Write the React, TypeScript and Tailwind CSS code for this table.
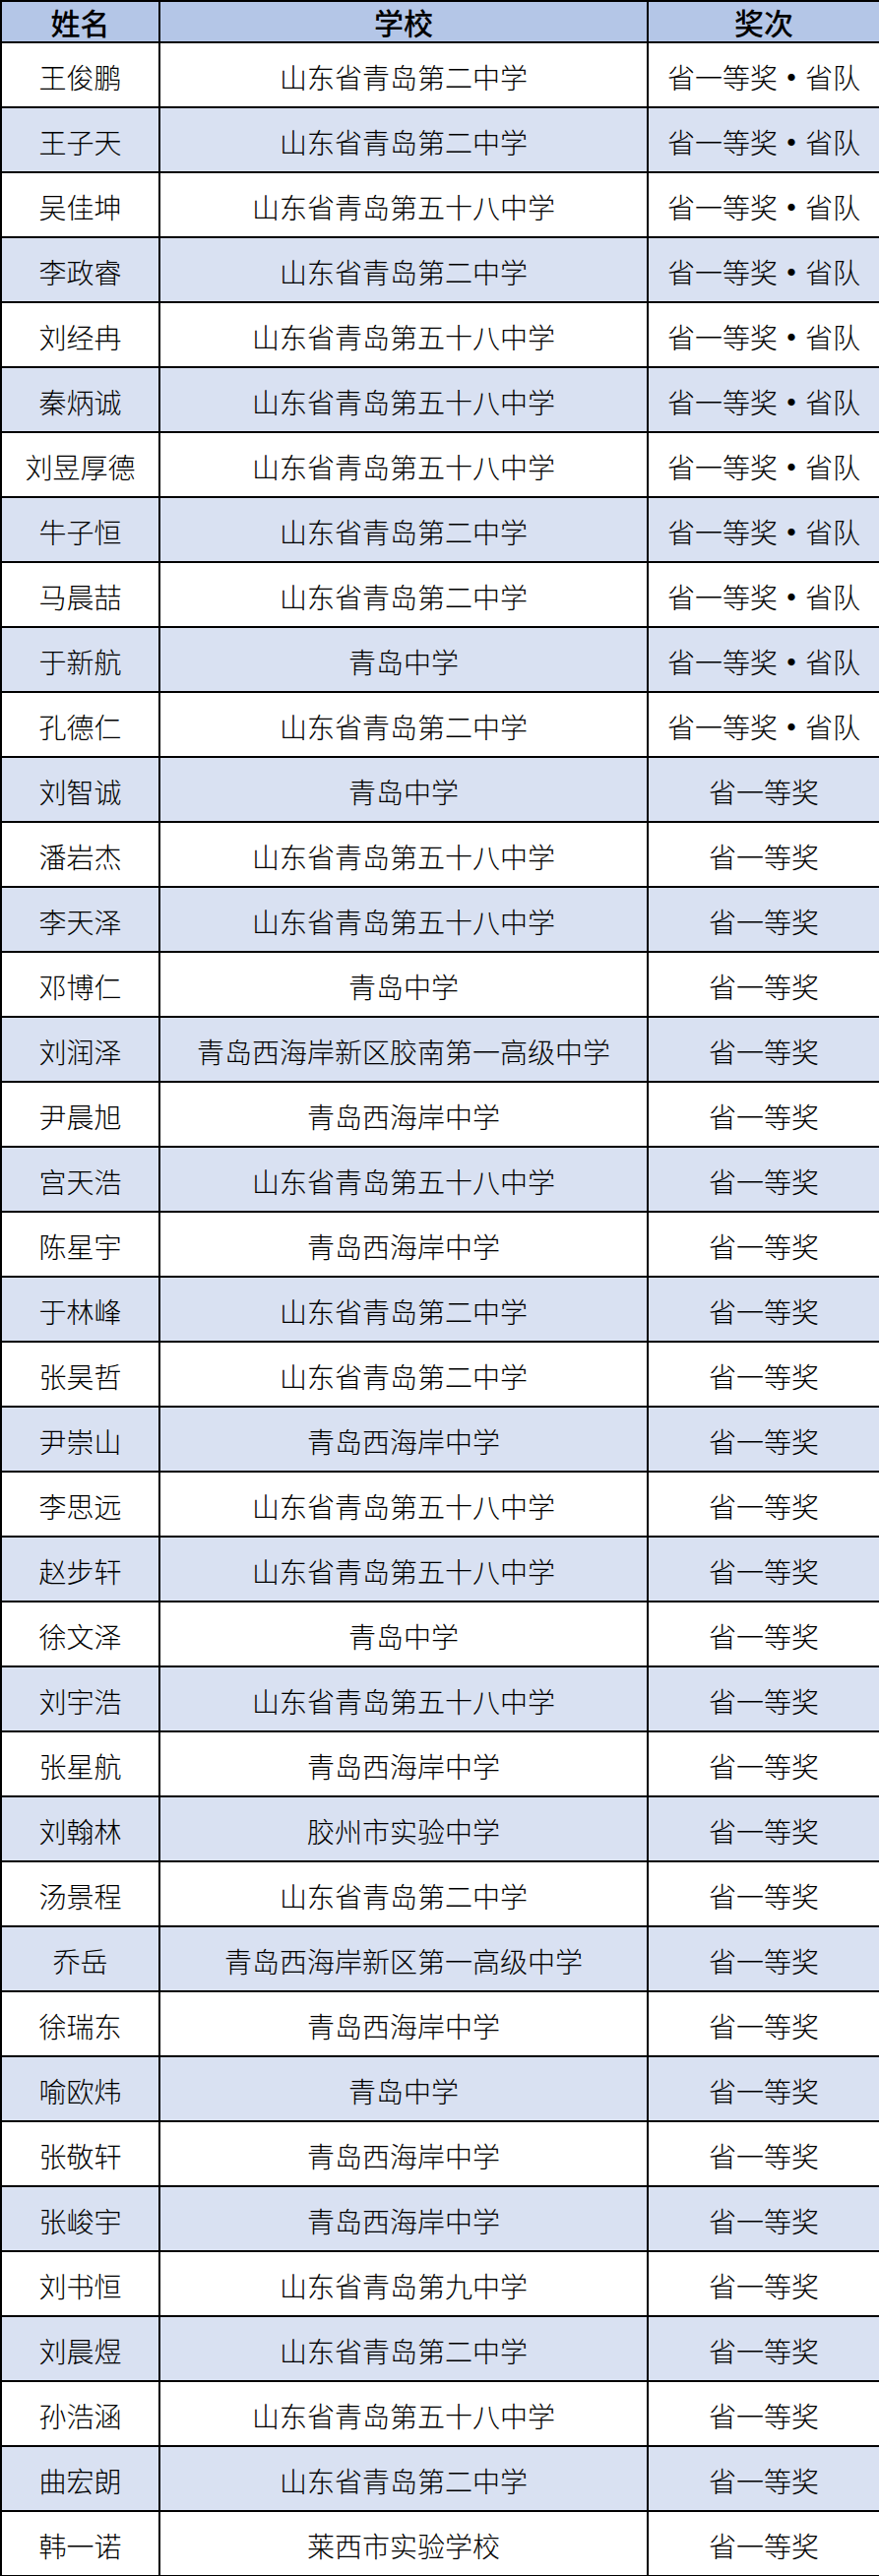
import React from 'react';

type Row = [string, string, boolean];

const rows: Row[] = [
  ['王俊鹏', '山东省青岛第二中学', true],
  ['王子天', '山东省青岛第二中学', true],
  ['吴佳坤', '山东省青岛第五十八中学', true],
  ['李政睿', '山东省青岛第二中学', true],
  ['刘经冉', '山东省青岛第五十八中学', true],
  ['秦炳诚', '山东省青岛第五十八中学', true],
  ['刘昱厚德', '山东省青岛第五十八中学', true],
  ['牛子恒', '山东省青岛第二中学', true],
  ['马晨喆', '山东省青岛第二中学', true],
  ['于新航', '青岛中学', true],
  ['孔德仁', '山东省青岛第二中学', true],
  ['刘智诚', '青岛中学', false],
  ['潘岩杰', '山东省青岛第五十八中学', false],
  ['李天泽', '山东省青岛第五十八中学', false],
  ['邓博仁', '青岛中学', false],
  ['刘润泽', '青岛西海岸新区胶南第一高级中学', false],
  ['尹晨旭', '青岛西海岸中学', false],
  ['宫天浩', '山东省青岛第五十八中学', false],
  ['陈星宇', '青岛西海岸中学', false],
  ['于林峰', '山东省青岛第二中学', false],
  ['张昊哲', '山东省青岛第二中学', false],
  ['尹崇山', '青岛西海岸中学', false],
  ['李思远', '山东省青岛第五十八中学', false],
  ['赵步轩', '山东省青岛第五十八中学', false],
  ['徐文泽', '青岛中学', false],
  ['刘宇浩', '山东省青岛第五十八中学', false],
  ['张星航', '青岛西海岸中学', false],
  ['刘翰林', '胶州市实验中学', false],
  ['汤景程', '山东省青岛第二中学', false],
  ['乔岳', '青岛西海岸新区第一高级中学', false],
  ['徐瑞东', '青岛西海岸中学', false],
  ['喻欧炜', '青岛中学', false],
  ['张敬轩', '青岛西海岸中学', false],
  ['张峻宇', '青岛西海岸中学', false],
  ['刘书恒', '山东省青岛第九中学', false],
  ['刘晨煜', '山东省青岛第二中学', false],
  ['孙浩涵', '山东省青岛第五十八中学', false],
  ['曲宏朗', '山东省青岛第二中学', false],
  ['韩一诺', '莱西市实验学校', false],
];

const font = { fontFamily: '"Noto Sans CJK SC", "Noto Sans", sans-serif' };

export default function App() {
  return (
    <div className="w-[893px] bg-white text-black" style={font}>
      <table className="w-[893px] table-fixed border-collapse border-2 border-black">
        <colgroup>
          <col className="w-[161px]" />
          <col className="w-[496px]" />
          <col className="w-[236px]" />
        </colgroup>
        <thead>
          <tr className="h-[42px] bg-[#b4c6e7] text-[30px] leading-none">
            <th className="border-2 border-black font-medium">姓名</th>
            <th className="border-2 border-black font-medium">学校</th>
            <th className="border-2 border-black font-medium">奖次</th>
          </tr>
        </thead>
        <tbody>
          {rows.map(([name, school, team], i) => (
            <tr
              key={name}
              className={`h-[66px] text-[28px] leading-none font-light ${i % 2 === 1 ? 'bg-[#d9e1f2]' : 'bg-white'}`}
            >
              <td className="border-2 border-black text-center pt-1">{name}</td>
              <td className="border-2 border-black text-center pt-1">{school}</td>
              <td className="border-2 border-black text-center pt-1 whitespace-nowrap">
                省一等奖
                {team && (
                  <>
                    <span className="inline-block w-[28px] text-center font-bold">•</span>
                    省队
                  </>
                )}
              </td>
            </tr>
          ))}
        </tbody>
      </table>
    </div>
  );
}
